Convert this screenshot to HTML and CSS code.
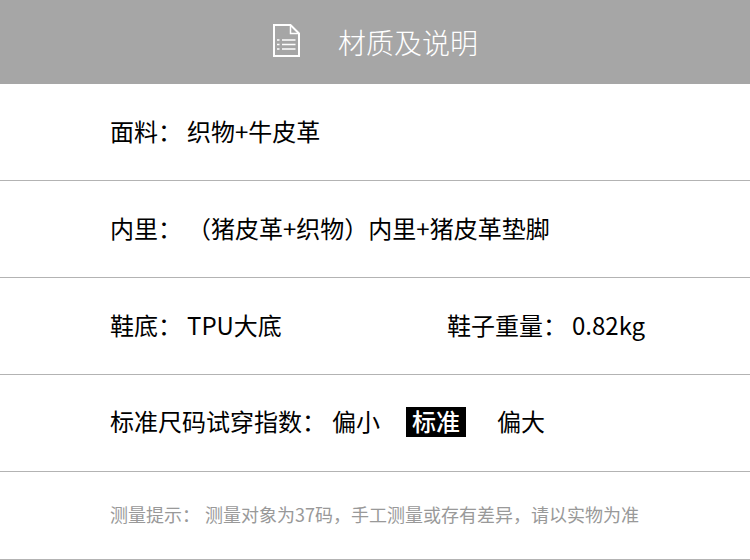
FILE: index.html
```html
<!DOCTYPE html>
<html lang="zh-CN">
<head>
<meta charset="utf-8">
<title>材质及说明</title>
<link rel="stylesheet" href="styles.css">
</head>
<body>
<header class="head">
  <svg class="doc" width="27" height="33" viewBox="0 0 27 33" fill="none" stroke="#fff" stroke-width="2">
    <path d="M1 1H17.5L26 9.5V32H1Z"/>
    <path d="M17.5 1V9.5H26" stroke-width="1.5"/>
    <path d="M4 16H6.5M9 16H22.5M4 20.5H6.5M9 20.5H22.5M4 25H6.5M9 25H22.5" stroke-width="1.5"/>
  </svg>
  <h1 class="title">材质及说明</h1>
</header>
<div class="row"><span class="label">面料：</span><span>织物+牛皮革</span></div>
<div class="row"><span class="label">内里：</span><span>（猪皮革+织物）内里+猪皮革垫脚</span></div>
<div class="row"><span class="label">鞋底：</span><span class="sole">TPU大底</span><span class="label">鞋子重量：</span><span>0.82kg</span></div>
<div class="row fit-row"><span class="fit-label">标准尺码试穿指数：</span><span class="fit">偏小</span><span class="fit active">标准</span><span class="fit">偏大</span></div>
<div class="row note"><span class="note-label">测量提示：</span><span>测量对象为37码，手工测量或存有差异，请以实物为准</span></div>
</body>
</html>
```
FILE: styles.css
```css
* { box-sizing: border-box; }
html, body { margin: 0; padding: 0; }
body {
  width: 750px;
  background: #fff;
  color: #000;
  font-family: "Noto Sans CJK SC", "Noto Sans", sans-serif;
  font-size: 24px;
  overflow: hidden;
}
.head {
  height: 84px;
  background: #a6a6a6;
  display: flex;
  align-items: center;
  padding-left: 273px;
  color: #fff;
}
.doc { flex: none; margin-right: 38px; margin-top: -3px; }
.title { margin: 0; font-size: 28px; font-weight: 300; line-height: 1; }
.row {
  height: 97px;
  border-bottom: 1px solid #b3b3b3;
  display: flex;
  align-items: center;
  padding: 0 0 2px 110px;
  white-space: pre;
  line-height: 1;
}
.label { width: 77px; flex: none; }
.sole { width: 260px; flex: none; }
.sole + .label { width: 125px; }
.fit-label { width: 222px; flex: none; margin-bottom: 2px; }
.fit { width: 48px; text-align: center; margin: 0 26px 2px 0; flex: none; }
.fit.active { width: 60px; height: 30px; line-height: 28px; background: #000; color: #fff; font-weight: 500; margin: 0 31px 0 0; }
.note { height: 88px; padding-bottom: 4px; font-size: 18px; color: #999; }
.note-label { width: 95px; flex: none; }
```
